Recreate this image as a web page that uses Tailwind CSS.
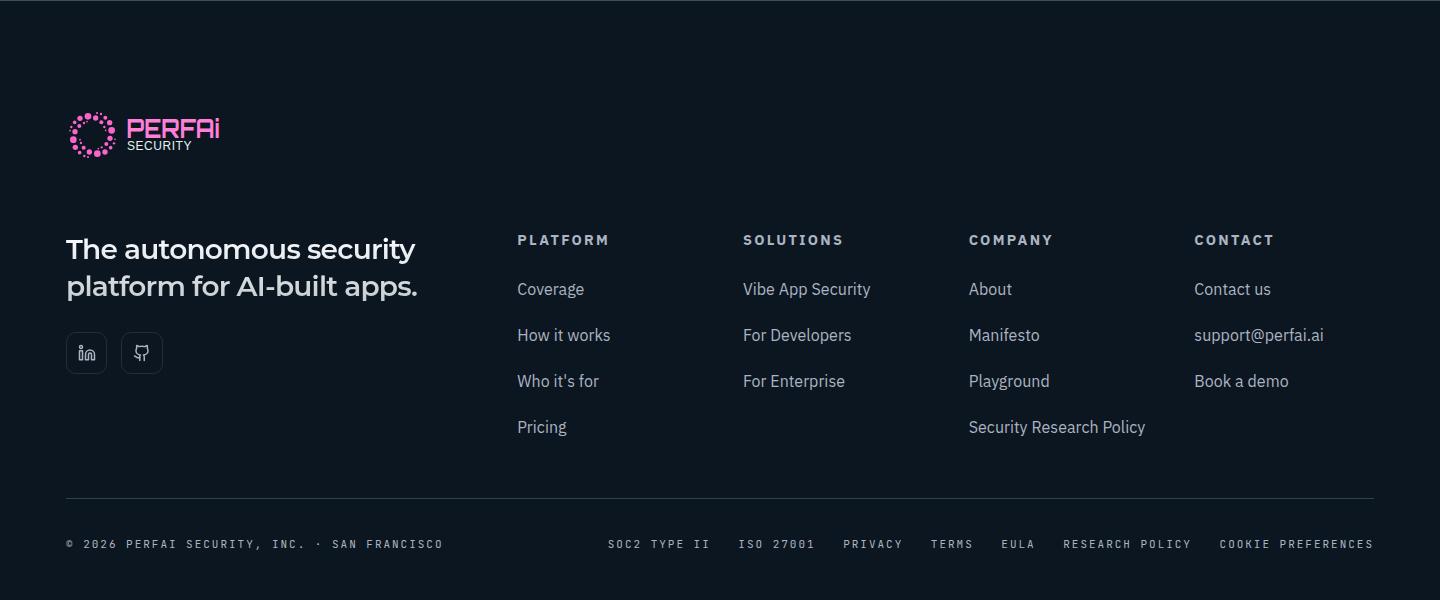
<!DOCTYPE html>
<html lang="en">
<head>
    <meta charset="UTF-8" />
    <meta name="viewport" content="width=device-width, initial-scale=1.0" />
    <title>PerfAI Security</title>
    <script src="https://cdn.jsdelivr.net/npm/@tailwindcss/browser@4"></script>
</head>
<body class="bg-[#0c1621]">

<footer class="h-[600px] overflow-hidden border-t border-[#3f505b] bg-[#0c1621] px-[66px] pt-[107px] font-['IBM_Plex_Sans',Roboto,sans-serif] text-[#abb4c0]">

    <!-- Logo -->
    <a href="#" class="block">
        <svg class="block overflow-visible" width="160" height="54" viewBox="0 0 160 54">
            <g fill="#fb64cb" transform="translate(-2 0) scale(.3333)">
                <circle cx="72" cy="25" r="10" />
                <circle cx="143" cy="67" r="10" />
                <circle cx="100" cy="137" r="10" />
                <circle cx="28" cy="95" r="10" />
                <circle cx="48" cy="31" r="8" />
                <circle cx="95" cy="30" r="8" />
                <circle cx="137" cy="44" r="8" />
                <circle cx="138" cy="91" r="8" />
                <circle cx="123" cy="132" r="8" />
                <circle cx="76" cy="132" r="8" />
                <circle cx="34" cy="118" r="8" />
                <circle cx="33" cy="71" r="8" />
                <circle cx="32" cy="43" r="5.5" />
                <circle cx="46" cy="54" r="6" />
                <circle cx="124" cy="29" r="6" />
                <circle cx="112" cy="43" r="6" />
                <circle cx="140" cy="119" r="5.5" />
                <circle cx="127" cy="108" r="6" />
                <circle cx="59" cy="119" r="6" />
                <circle cx="47" cy="134" r="5.5" />
                <circle cx="60" cy="45" r="3.5" />
                <circle cx="69" cy="41" r="2.5" />
                <circle cx="99" cy="15" r="3" />
                <circle cx="111" cy="18" r="3.5" />
                <circle cx="121" cy="57" r="3.5" />
                <circle cx="125" cy="67" r="2.5" />
                <circle cx="22" cy="57" r="3.5" />
                <circle cx="18" cy="68" r="2.5" />
                <circle cx="48" cy="95" r="2.5" />
                <circle cx="51" cy="105" r="3.5" />
                <circle cx="150" cy="106" r="3.5" />
                <circle cx="153" cy="94" r="2.5" />
                <circle cx="113" cy="118" r="3.5" />
                <circle cx="103" cy="122" r="2.5" />
                <circle cx="61" cy="144" r="3.5" />
                <circle cx="72" cy="147" r="3" />
            </g>
            <text x="60.5" y="29.5" textLength="93" lengthAdjust="spacingAndGlyphs" fill="#fe7fd8" font-family="Orbitron, Inter, sans-serif" font-weight="700" font-size="26">PERFAi</text>
            <text x="61" y="42" textLength="64.5" fill="#e6f1f3" font-family="Liberation Sans, sans-serif" font-size="12">SECURITY</text>
        </svg>
    </a>

    <div class="mt-[69px] grid h-[268px] grid-cols-[405.3px_repeat(4,1fr)] gap-x-[46px] border-b border-[#2f434e]">
        <div>
            <h2 class="bg-linear-to-b from-[#f8fafc] from-10% to-[#c3c9ce] bg-clip-text font-[Montserrat,Inter,sans-serif] text-[28px] leading-[37px] font-semibold tracking-[-0.79px] whitespace-nowrap text-transparent">
                The autonomous security<br />
                platform for AI-built apps.
            </h2>
            <div class="mt-[27px] flex gap-[13.6px]">
                <a href="#" class="flex h-[42px] w-[41.4px] items-center justify-center rounded-[10px] border border-[#1f2e39]">
                    <svg class="ml-px size-[18px]" viewBox="0 0 24 24" fill="none" stroke="currentColor" stroke-width="2" stroke-linecap="round" stroke-linejoin="round">
                        <path d="M16 8a6 6 0 0 1 6 6v7h-4v-7a2 2 0 0 0-4 0v7h-4v-7a6 6 0 0 1 6-6z" />
                        <rect x="2" y="9" width="4" height="12" />
                        <circle cx="4" cy="4" r="2" />
                    </svg>
                </a>
                <a href="#" class="flex size-[42px] items-center justify-center rounded-[10px] border border-[#1f2e39]">
                    <svg class="size-[18px]" viewBox="0 0 24 24" fill="none" stroke="currentColor" stroke-width="2" stroke-linecap="round" stroke-linejoin="round">
                        <path d="M15 22v-4a4.8 4.8 0 0 0-1-3.5c3 0 6-2 6-5.5.08-1.25-.27-2.48-1-3.5.28-1.15.28-2.35 0-3.5 0 0-1 0-3 1.5-2.64-.5-5.36-.5-8 0C6 2 5 2 5 2c-.3 1.15-.3 2.35 0 3.5A5.4 5.4 0 0 0 4 9c0 3.5 3 5.5 6 5.5-.39.49-.68 1.05-.85 1.65-.17.6-.22 1.23-.15 1.85v4" />
                        <path d="M9 18c-4.51 2-5-2-7-2" />
                    </svg>
                </a>
            </div>
        </div>

        <div class="whitespace-nowrap">
            <h3 class="text-[14.4px] leading-[18px] font-bold tracking-[2.3px]">PLATFORM</h3>
            <ul class="mt-7 space-y-[22px] leading-6 tracking-[0.04px]">
                <li><a href="#">Coverage</a></li>
                <li><a href="#">How it works</a></li>
                <li><a href="#">Who it's for</a></li>
                <li><a href="#">Pricing</a></li>
            </ul>
        </div>
        <div class="whitespace-nowrap">
            <h3 class="text-[14.4px] leading-[18px] font-bold tracking-[2.3px]">SOLUTIONS</h3>
            <ul class="mt-7 space-y-[22px] leading-6 tracking-[0.04px]">
                <li><a href="#">Vibe App Security</a></li>
                <li><a href="#">For Developers</a></li>
                <li><a href="#">For Enterprise</a></li>
            </ul>
        </div>
        <div class="whitespace-nowrap">
            <h3 class="text-[14.4px] leading-[18px] font-bold tracking-[2.3px]">COMPANY</h3>
            <ul class="mt-7 space-y-[22px] leading-6 tracking-[0.04px]">
                <li><a href="#">About</a></li>
                <li><a href="#">Manifesto</a></li>
                <li><a href="#">Playground</a></li>
                <li><a href="#">Security Research Policy</a></li>
            </ul>
        </div>
        <div class="whitespace-nowrap">
            <h3 class="text-[14.4px] leading-[18px] font-bold tracking-[2.3px]">CONTACT</h3>
            <ul class="mt-7 space-y-[22px] leading-6 tracking-[0.04px]">
                <li><a href="#">Contact us</a></li>
                <li><a href="#">support@perfai.ai</a></li>
                <li><a href="#">Book a demo</a></li>
            </ul>
        </div>
    </div>

    <div class="mt-[37px] flex justify-between font-['JetBrains_Mono','DejaVu_Sans_Mono',monospace] text-[11px] leading-4 tracking-[1.98px] whitespace-nowrap">
        <p>© 2026 PERFAI SECURITY, INC. · SAN FRANCISCO</p>
        <div class="flex gap-[27.6px]">
            <span>SOC2 TYPE II</span>
            <span>ISO 27001</span>
            <a href="#">PRIVACY</a>
            <a href="#">TERMS</a>
            <a href="#">EULA</a>
            <a href="#">RESEARCH POLICY</a>
            <a href="#">COOKIE PREFERENCES</a>
        </div>
    </div>
</footer>

</body>
</html>
